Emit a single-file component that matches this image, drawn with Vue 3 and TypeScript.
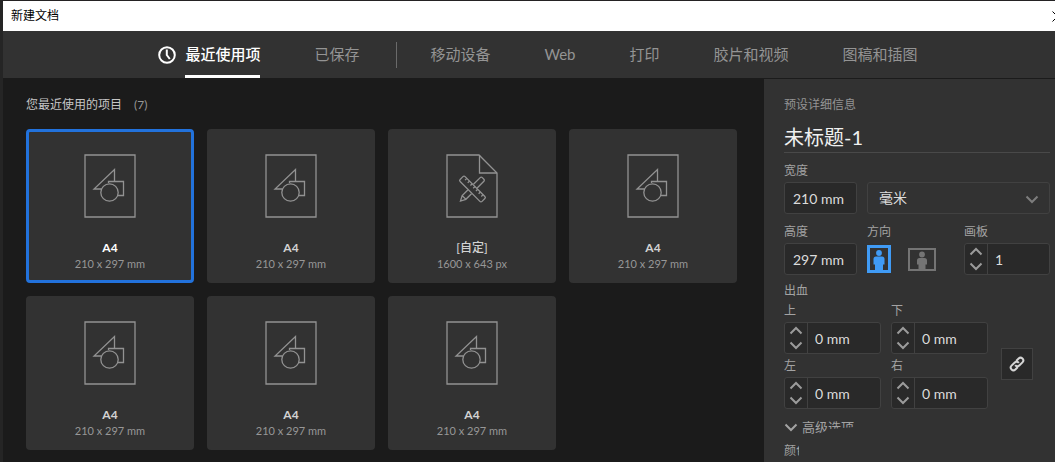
<script setup lang="ts">
import { ref, reactive } from 'vue'

interface Tab {
  id: string
  label: string
}

interface Preset {
  id: number
  name: string
  size: string
  kind: 'art' | 'custom'
}

interface Bleed {
  id: string
  label: string
  value: number
}

const personalTabs: Tab[] = [
  { id: 'recent', label: '最近使用项' },
  { id: 'saved', label: '已保存' },
]

const categoryTabs: Tab[] = [
  { id: 'mobile', label: '移动设备' },
  { id: 'web', label: 'Web' },
  { id: 'print', label: '打印' },
  { id: 'film', label: '胶片和视频' },
  { id: 'art', label: '图稿和插图' },
]

const presets: Preset[] = [
  { id: 1, name: 'A4', size: '210 x 297 mm', kind: 'art' },
  { id: 2, name: 'A4', size: '210 x 297 mm', kind: 'art' },
  { id: 3, name: '[自定]', size: '1600 x 643 px', kind: 'custom' },
  { id: 4, name: 'A4', size: '210 x 297 mm', kind: 'art' },
  { id: 5, name: 'A4', size: '210 x 297 mm', kind: 'art' },
  { id: 6, name: 'A4', size: '210 x 297 mm', kind: 'art' },
  { id: 7, name: 'A4', size: '210 x 297 mm', kind: 'art' },
]

const activeTab = ref('recent')
const activePreset = ref(1)
const docName = ref('未标题-1')
const docWidth = ref('210 mm')
const docHeight = ref('297 mm')
const orientation = ref('portrait')
const artboards = ref(1)
const bleeds = reactive<Bleed[]>([
  { id: 'top', label: '上', value: 0 },
  { id: 'bottom', label: '下', value: 0 },
  { id: 'left', label: '左', value: 0 },
  { id: 'right', label: '右', value: 0 },
])

function stepBleed(bleed: Bleed, by: number) {
  bleed.value = Math.max(0, bleed.value + by)
}

function stepArtboards(by: number) {
  artboards.value = Math.max(1, artboards.value + by)
}
</script>

<template>
  <div class="window">
    <header class="titlebar">
      <span>新建文档</span>
      <button class="close" type="button" aria-label="关闭">
        <svg width="11" height="11" viewBox="0 0 11 11"><path d="M.5.5l10 10M10.5.5l-10 10" /></svg>
      </button>
    </header>

    <nav class="tabs">
      <button
        v-for="tab in personalTabs"
        :key="tab.id"
        type="button"
        class="tab"
        :class="{ active: tab.id === activeTab }"
        @click="activeTab = tab.id"
      >
        <svg v-if="tab.id === 'recent'" class="clock" width="18" height="18" viewBox="0 0 18 18">
          <circle cx="9" cy="9" r="7.8" />
          <path d="M8.8 3.5V9l3 4" />
        </svg>
        <span class="tab-label">{{ tab.label }}</span>
      </button>
      <span class="divider"></span>
      <button
        v-for="tab in categoryTabs"
        :key="tab.id"
        type="button"
        class="tab"
        :class="{ active: tab.id === activeTab }"
        @click="activeTab = tab.id"
      >
        <span class="tab-label">{{ tab.label }}</span>
      </button>
    </nav>

    <div class="body">
      <main class="gallery">
        <h2 class="gallery-title">您最近使用的项目 <span class="count">(7)</span></h2>
        <div class="cards">
          <button
            v-for="preset in presets"
            :key="preset.id"
            type="button"
            class="card"
            :class="{ selected: preset.id === activePreset }"
            @click="activePreset = preset.id"
          >
            <svg v-if="preset.kind === 'art'" class="doc" width="52" height="64" viewBox="0 0 52 64">
              <path d="M1 1h50v62H1z" />
              <path d="M17.500 35H10L30.500 15.500V27" />
              <path d="M24.500 29V27.500H39.500V41.500H34" />
              <circle cx="25.500" cy="38.500" r="8.700" />
            </svg>
            <svg v-else class="doc" width="52" height="64" viewBox="0 0 52 64">
              <path d="M1 1h32l18 18v44H1z" />
              <path d="M33.500 1v18H51" />
              <g transform="translate(26.500 35) rotate(45)">
                <path d="M-2.600 -4V-13.500a1.500 1.500 0 0 1 1.500-1.500H1.100a1.500 1.500 0 0 1 1.500 1.500V-4M-2.600 4V12L0 17L2.600 12V4M-2.600 12H2.600" />
              </g>
              <g transform="translate(26.500 35) rotate(-45)">
                <rect x="-3.500" y="-15.500" width="7" height="31" rx="1.500" />
                <path d="M3.500 -11.500H1M3.500 -7.700H1M3.500 -3.900H1M3.500 0H1M3.500 3.900H1M3.500 7.700H1M3.500 11.500H1" />
              </g>
            </svg>
            <strong class="card-name" :class="{ custom: preset.kind === 'custom' }">{{ preset.name }}</strong>
            <span class="card-size">{{ preset.size }}</span>
          </button>
        </div>
      </main>

      <aside class="details">
        <h2 class="details-title">预设详细信息</h2>
        <input v-model="docName" class="doc-name" type="text" aria-label="名称" />

        <div class="grid">
          <div class="field">
            <label for="doc-width">宽度</label>
            <input id="doc-width" v-model="docWidth" class="box" type="text" />
          </div>
          <div class="field unit">
            <div class="select-wrap">
              <select class="box" aria-label="单位">
                <option>毫米</option>
              </select>
              <svg class="select-arrow" width="14" height="9" viewBox="0 0 14 9"><path d="M1.500 1.500L7 7l5.500-5.500" /></svg>
            </div>
          </div>
          <div class="field">
            <label for="doc-height">高度</label>
            <input id="doc-height" v-model="docHeight" class="box" type="text" />
          </div>
          <fieldset class="field">
            <legend>方向</legend>
            <div class="orientations">
              <label class="orient">
                <input v-model="orientation" type="radio" name="orientation" value="portrait" aria-label="纵向" />
                <svg width="24" height="28" viewBox="0 0 24 28">
                  <path class="frame" d="M1.500 1.500h21v25h-21z" />
                  <circle cx="12" cy="8" r="2.900" />
                  <path d="M9 11.500h6a2.500 2.500 0 0 1 2.500 2.500v5.500h-1.500V26H8v-6.500H6.500V14A2.500 2.500 0 0 1 9 11.500z" />
                </svg>
              </label>
              <label class="orient">
                <input v-model="orientation" type="radio" name="orientation" value="landscape" aria-label="横向" />
                <svg width="28" height="23" viewBox="0 0 28 23">
                  <path class="frame" d="M1 1h26v21h-26z" />
                  <circle cx="14" cy="6.500" r="2.900" />
                  <path d="M11.500 10h5a2.500 2.500 0 0 1 2.500 2.500V16.500h-1.500v5h-7v-5H9v-4A2.500 2.500 0 0 1 11.500 10z" />
                </svg>
              </label>
            </div>
          </fieldset>
          <div class="field">
            <label for="artboards">画板</label>
            <div class="stepper">
              <div class="arrows">
                <button type="button" aria-label="增加画板" @click="stepArtboards(1)">
                  <svg width="14" height="9" viewBox="0 0 14 9"><path d="M1.500 7.500L7 2l5.500 5.500" /></svg>
                </button>
                <button type="button" aria-label="减少画板" @click="stepArtboards(-1)">
                  <svg width="14" height="9" viewBox="0 0 14 9"><path d="M1.500 1.500L7 7l5.500-5.500" /></svg>
                </button>
              </div>
              <input id="artboards" type="text" :value="artboards" />
            </div>
          </div>
        </div>

        <h3 class="bleed-title">出血</h3>
        <div class="bleed">
          <div class="bleed-grid">
            <div v-for="bleed in bleeds" :key="bleed.id" class="field">
              <label :for="'bleed-' + bleed.id">{{ bleed.label }}</label>
              <div class="stepper">
                <div class="arrows">
                  <button type="button" :aria-label="bleed.label + ' 增加'" @click="stepBleed(bleed, 1)">
                    <svg width="14" height="9" viewBox="0 0 14 9"><path d="M1.500 7.500L7 2l5.500 5.500" /></svg>
                  </button>
                  <button type="button" :aria-label="bleed.label + ' 减少'" @click="stepBleed(bleed, -1)">
                    <svg width="14" height="9" viewBox="0 0 14 9"><path d="M1.500 1.500L7 7l5.500-5.500" /></svg>
                  </button>
                </div>
                <input :id="'bleed-' + bleed.id" type="text" :value="bleed.value + ' mm'" />
              </div>
            </div>
          </div>
          <button class="link" type="button" aria-label="链接所有设置">
            <svg width="16" height="16" viewBox="0 0 16 16">
              <g transform="rotate(-45 8 8)">
                <path d="M6.500 10.700H3a2.700 2.700 0 0 1 0-5.400h4.500a2.700 2.700 0 0 1 2.600 3.200" />
                <path d="M9.500 5.300H13a2.700 2.700 0 0 1 0 5.400H8.500a2.700 2.700 0 0 1-2.600-3.200" />
              </g>
            </svg>
          </button>
        </div>

        <button class="advanced" type="button">
          <svg width="14" height="9" viewBox="0 0 14 9"><path d="M1.500 1.500L7 7l5.500-5.500" /></svg>
          <span>高级选项</span>
        </button>
        <div class="color-mode">颜色</div>
      </aside>
    </div>
  </div>
</template>

<style>
body {
  background: #1b1b1b;
}
</style>

<style scoped>
* {
  box-sizing: border-box;
}

.window {
  display: flex;
  flex-direction: column;
  min-height: 100vh;
  border-top: 1px solid #242223;
  border-left: 3px solid #252525;
  background: #1b1b1b;
  color: #a3a3a3;
  font: 12px/16px Lato, "Noto Sans CJK SC", sans-serif;
  overflow: hidden;
}

button,
input,
select {
  margin: 0;
  padding: 0;
  border: 0;
  background: none;
  color: inherit;
  font: inherit;
}

button {
  cursor: pointer;
}

h2,
h3 {
  margin: 0;
  font-size: 12px;
  font-weight: 400;
}

svg {
  display: block;
  flex: none;
  fill: none;
  stroke: currentColor;
}

.titlebar {
  display: flex;
  align-items: center;
  justify-content: space-between;
  height: 30px;
  padding-left: 8px;
  background: #fff;
  color: #000;
}

.close {
  margin-right: -8px;
}

.tabs {
  display: flex;
  justify-content: center;
  height: 48px;
  padding-left: 18px;
  border-bottom: 1px solid #1b1b1b;
  background: #323232;
  font-size: 15px;
}

.tab {
  display: flex;
  align-items: center;
  gap: 9px;
  padding: 0 27px;
  color: #949494;
  white-space: nowrap;
}

.tab-label {
  display: flex;
  align-items: center;
  height: 100%;
  padding-bottom: 2px;
  border-top: 3px solid transparent;
  border-bottom: 3px solid transparent;
}

.tab.active {
  color: #fff;
  font-weight: 500;
}

.tab.active .tab-label {
  border-bottom-color: #fff;
}

.clock {
  stroke-width: 2;
}

.divider {
  width: 1px;
  height: 26px;
  margin: 11px 6px 0 10px;
  background: #6a6a6a;
}

.body {
  display: flex;
  flex: 1;
}

.gallery {
  flex: 1;
  min-width: 0;
  padding: 18px 23px 12px;
}

.gallery-title {
  margin-bottom: 16px;
  color: #c6c6c6;
}

.count {
  margin-left: 9px;
  color: #979797;
}

.cards {
  display: grid;
  grid-template-columns: repeat(auto-fill, 168px);
  gap: 13px;
}

.card {
  display: flex;
  flex-direction: column;
  align-items: center;
  height: 154px;
  padding-top: 25px;
  border: 0 solid #2272dc;
  border-radius: 4px;
  background: #323232;
}

.card.selected {
  padding-top: 22px;
  border-width: 3px;
}

.doc {
  margin-bottom: 22px;
  color: #929292;
  stroke-width: 1.3;
}

.card-name {
  color: #d2d2d2;
  font-size: 12px;
  font-weight: 700;
}

.card-name.custom {
  font-weight: 500;
}

.card.selected .card-name {
  color: #fff;
}

.card-size {
  color: #979797;
  font-size: 11px;
}

.details {
  display: flex;
  flex: 0 0 291px;
  flex-direction: column;
  align-items: stretch;
  padding: 18px 5px 2px 20px;
  background: #323232;
}

.doc-name {
  width: 100%;
  height: 31px;
  margin: 9px 0 10px;
  padding-bottom: 2px;
  border-bottom: 1px solid #494949;
  color: #f0f0f0;
  font-size: 20px;
  line-height: 28px;
}

.details-title {
  color: #949494;
}

.grid {
  display: grid;
  grid-template-columns: 73px 87px 1fr;
  gap: 10px;
}

.field {
  display: flex;
  flex-direction: column;
  gap: 3px;
  min-width: 0;
  margin: 0;
  padding: 0;
  border: 0;
}

legend {
  padding: 0;
  margin-bottom: 3px;
}

.unit {
  grid-column: span 2;
  justify-content: flex-end;
}

.box,
.stepper {
  width: 100%;
  height: 32px;
  border: 1px solid #414141;
  border-radius: 3px;
  background: #292929;
  color: #dcdcdc;
  font-size: 14px;
}

.box {
  padding-left: 8px;
}

.select-wrap {
  position: relative;
}

select.box {
  display: block;
  appearance: none;
  padding-left: 11px;
  background: #323232;
}

.select-arrow {
  position: absolute;
  top: 13px;
  right: 11px;
  color: #7d7d7d;
  stroke-width: 2;
  pointer-events: none;
}

.orientations {
  display: flex;
  align-items: center;
  gap: 17px;
  height: 32px;
}

.orient {
  position: relative;
  color: #747474;
  cursor: pointer;
}

.orient input {
  position: absolute;
  inset: 0;
  opacity: 0;
}

.orient:has(input:checked) {
  color: #409bf5;
}

.orient svg {
  fill: currentColor;
  stroke: none;
}

.orient .frame {
  fill: none;
  stroke: currentColor;
  stroke-width: 2;
}

.orient:has(input:checked) .frame {
  stroke-width: 3;
}

.stepper {
  display: flex;
}

.arrows {
  display: flex;
  flex: 0 0 23px;
  flex-direction: column;
  justify-content: center;
  align-items: center;
  gap: 6px;
  border-right: 1px solid #414141;
  color: #9b9b9b;
  stroke-width: 2;
}

.stepper input {
  flex: 1;
  width: 0;
  padding: 1px 0 0 7px;
}

.bleed-title {
  margin: 8px 0 4px;
}

.bleed {
  display: flex;
  align-items: center;
  gap: 13px;
}

.bleed-grid {
  display: grid;
  grid-template-columns: 97px 97px;
  gap: 4px 10px;
}

.link {
  display: grid;
  place-items: center;
  width: 32px;
  height: 32px;
  margin-top: 16px;
  border: 1px solid #414141;
  background: #292929;
  color: #d5d5d5;
  stroke-width: 2;
}

.advanced {
  display: flex;
  align-items: center;
  gap: 4px;
  margin: 10px 0 8px;
  font-size: 13px;
  stroke-width: 2;
}

.advanced span {
  clip-path: polygon(0 0, 100% 0, 100% 50%, 55% 62%, 25% 100%, 0 100%);
}

.color-mode {
  width: 15px;
  overflow: hidden;
  white-space: nowrap;
}
</style>
